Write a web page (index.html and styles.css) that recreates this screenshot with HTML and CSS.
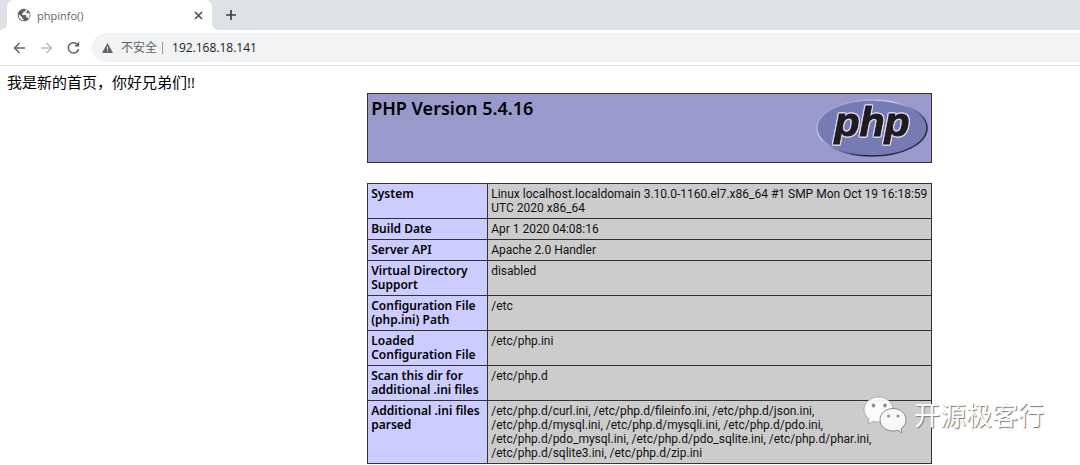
FILE: index.html
```html
<!DOCTYPE html>
<html lang="zh-CN">
<head>
<meta charset="utf-8">
<title>phpinfo()</title>
<link rel="stylesheet" href="styles.css">
</head>
<body>
<header class="browser">
  <div class="tabs">
    <div class="tab-lead"></div>
    <div class="tab">
      <svg class="globe" viewBox="0 0 14 14" aria-hidden="true"><circle cx="7" cy="7" r="6.3" fill="#5f6368"/><path d="M1.800 6.300l3.400 3.300v1l1.400.8v1.200C3.700 12.400 1.500 9.700 1.800 6.300z" fill="#fff"/><path d="M8.500 1.600v.9L7.700 3.700H6.200v1.600L5 6v1h3.500l.9 1v1.400h1.300l.8.9c1.200-1.700 1.400-3.300.8-5.300l-1.600.5-1.600-.9.5-1.200 1-.8c-.6-.5-1.300-.9-2.100-1z" fill="#fff"/></svg>
      <span class="tab-title">phpinfo()</span>
      <button class="icon-button close" aria-label="Close tab"><svg width="9" height="9" viewBox="0 0 9 9"><path d="M1 1l7 7M8 1L1 8" stroke="#45494d" stroke-width="1.500" fill="none"/></svg></button>
    </div>
    <div class="tab-rest">
      <button class="icon-button" aria-label="New tab"><svg width="12" height="12" viewBox="0 0 12 12"><path d="M6 1v10M1 6h10" stroke="#3c4043" stroke-width="1.700" fill="none"/></svg></button>
    </div>
  </div>
  <div class="toolbar">
    <button class="icon-button" aria-label="Back"><svg width="13" height="12" viewBox="0 0 13 12"><path d="M12 6H1.500M6.500 1l-5 5 5 5" stroke="#5f6368" stroke-width="1.500" fill="none"/></svg></button>
    <button class="icon-button" aria-label="Forward"><svg width="13" height="12" viewBox="0 0 13 12"><path d="M1 6h10.500M6.500 1l5 5-5 5" stroke="#b9bbbe" stroke-width="1.500" fill="none"/></svg></button>
    <button class="icon-button" aria-label="Reload"><svg width="13" height="13" viewBox="0 0 13 13"><path d="M11 4.200A5.200 5.200 0 1 0 11.600 8" stroke="#5f6368" stroke-width="1.500" fill="none"/><path d="M12.200.6v5H7.200z" fill="#5f6368"/></svg></button>
    <div class="omnibox">
      <svg width="11" height="10" viewBox="0 0 11 10" aria-hidden="true"><path d="M5.500 0L11 10H0z" fill="#5f6368"/><path d="M5.500 3.500v3M5.500 7.400v1.200" stroke="#f1f3f4" stroke-width="1.100"/></svg>
      <span class="insecure">不安全</span>
      <input class="address" type="text" aria-label="Address" value="192.168.18.141">
    </div>
  </div>
</header>
<main class="page">
  <p class="greeting">我是新的首页，你好兄弟们!!</p>
  <div class="info">
    <div class="banner">
      <h1>PHP Version 5.4.16</h1>
      <svg class="php-logo" width="112" height="60" viewBox="0 0 112 60" role="img" aria-label="PHP logo">
        <defs>
          <linearGradient id="rim" x1="0" y1="0" x2="1" y2="1"><stop offset="0.150" stop-color="#a0a2d4"/><stop offset="0.350" stop-color="#c9cceb"/><stop offset="0.500" stop-color="#8084b8"/><stop offset="0.720" stop-color="#25253d"/><stop offset="1" stop-color="#343452"/></linearGradient>
        </defs>
        <ellipse cx="56" cy="30" rx="55" ry="28" fill="#777bb3" stroke="url(#rim)" stroke-width="1.500"/>
        <text class="php-word" x="56" y="38" text-anchor="middle">php</text>
      </svg>
    </div>
    <table class="details">
      <tbody>
        <tr><th scope="row">System</th><td>Linux localhost.localdomain 3.10.0-1160.el7.x86_64 #1 SMP Mon Oct 19 16:18:59<br>UTC 2020 x86_64</td></tr>
        <tr><th scope="row">Build Date</th><td>Apr 1 2020 04:08:16</td></tr>
        <tr><th scope="row">Server API</th><td>Apache 2.0 Handler</td></tr>
        <tr><th scope="row">Virtual Directory<br>Support</th><td>disabled</td></tr>
        <tr><th scope="row">Configuration File<br>(php.ini) Path</th><td>/etc</td></tr>
        <tr><th scope="row">Loaded<br>Configuration File</th><td>/etc/php.ini</td></tr>
        <tr><th scope="row">Scan this dir for<br>additional .ini files</th><td>/etc/php.d</td></tr>
        <tr><th scope="row">Additional .ini files<br>parsed</th><td>/etc/php.d/curl.ini, /etc/php.d/fileinfo.ini, /etc/php.d/json.ini,<br>/etc/php.d/mysql.ini, /etc/php.d/mysqli.ini, /etc/php.d/pdo.ini,<br>/etc/php.d/pdo_mysql.ini, /etc/php.d/pdo_sqlite.ini, /etc/php.d/phar.ini,<br>/etc/php.d/sqlite3.ini, /etc/php.d/zip.ini</td></tr>
      </tbody>
    </table>
  </div>
</main>
<div class="watermark">
  <svg width="44" height="38" viewBox="0 0 44 38" aria-hidden="true">
    <path d="M15.500 1C7.500 1 1 6.500 1 13.500c0 4 2 7.300 5.200 9.600L5 28l5.500-2.800c1.600.5 3.200.8 5 .8C23.500 26 30 20.500 30 13.500S23.500 1 15.500 1z" fill="#fff" fill-opacity="0.920" stroke="#999" stroke-width="0.700"/>
    <ellipse cx="10.500" cy="9.500" rx="1.800" ry="1.900" fill="#8d8d8d"/><ellipse cx="22" cy="9.500" rx="1.800" ry="1.900" fill="#8d8d8d"/>
    <path d="M30 12.500c-7.300 0-13 5-13 11.300S22.700 35 30 35c1.700 0 3.300-.3 4.800-.8L39 37l-1-4.400c3.200-2 5-5.200 5-8.800 0-6.300-5.700-11.300-13-11.300z" fill="#f8f8f8" stroke="#888" stroke-width="1"/>
    <ellipse cx="25.500" cy="20" rx="1.500" ry="1.600" fill="#8d8d8d"/><ellipse cx="35" cy="20" rx="1.500" ry="1.600" fill="#8d8d8d"/>
  </svg>
  <span>开源极客行</span>
</div>
</body>
</html>
```
FILE: styles.css
```css
* { box-sizing: border-box; }
body {
  margin: 0;
  background: #fff;
  color: #000;
  font-family: "Open Sans", "Noto Sans CJK SC", sans-serif;
  font-size: 12px;
  overflow: hidden;
}
.tabs { display: flex; height: 30px; background: #fff; }
.tab-lead { width: 7px; background: #dee1e6; border-bottom-right-radius: 7px; }
.tab {
  display: flex;
  align-items: center;
  width: 205px;
  padding: 0 7px 0 10px;
  background: linear-gradient(#dee1e6 0 8px, #fff 8px);
  position: relative;
  isolation: isolate;
}
.tab::before {
  content: "";
  position: absolute;
  inset: 0;
  z-index: -1;
  background: #fff;
  border-radius: 7px 7px 0 0;
}
.globe { width: 14px; height: 14px; }
.tab-title { flex: 1; margin-left: 6px; font-size: 11px; color: #5f6368; }
.icon-button {
  display: inline-flex;
  align-items: center;
  justify-content: center;
  width: 13px;
  height: 14px;
  padding: 0;
  border: 0;
  background: none;
}
.tab-rest {
  display: flex;
  flex: 1;
  align-items: center;
  padding-left: 12px;
  background: #dee1e6;
  border-bottom-left-radius: 7px;
}
.toolbar {
  display: flex;
  align-items: center;
  gap: 14px;
  height: 36px;
  padding-left: 13px;
  border-bottom: 1px solid #e0e1e3;
}
.omnibox {
  display: flex;
  flex: 1;
  align-items: center;
  height: 29px;
  margin-left: -2px;
  padding-left: 10px;
  background: #f1f3f4;
  border-radius: 15px 0 0 15px;
}
.insecure {
  margin-left: 8px;
  padding-right: 5px;
  border-right: 1px solid #8d9094;
  line-height: 12px;
  color: #5f6368;
}
.address {
  flex: 1;
  min-width: 0;
  padding: 0 0 0 9px;
  border: 0;
  background: none;
  color: #202124;
  font: inherit;
}
.greeting { margin: 0; padding: 6px 7px 0; font-size: 15px; line-height: 21px; }
.info { width: 565px; max-width: 66%; margin-left: 34%; }
.banner {
  display: flex;
  justify-content: space-between;
  height: 70px;
  padding: 4px 3px;
  border: 1px solid #333;
  background: #9999cc;
}
.banner h1 {
  margin: 0;
  font-family: "Noto Sans", sans-serif;
  font-size: 18px;
  font-weight: 600;
  line-height: 20px;
}
.php-word {
  font: italic bold 41px "Liberation Sans", sans-serif;
  fill: #1f1b20;
  stroke: #1f1b20;
  stroke-width: 1px;
  filter: drop-shadow(1px 0 0 #dcdcec) drop-shadow(-1px 0 0 #dcdcec) drop-shadow(0 1px 0 #dcdcec) drop-shadow(0 -1px 0 #dcdcec);
}
.details {
  width: 100%;
  margin-top: 20px;
  border-collapse: collapse;
  table-layout: fixed;
  line-height: 14px;
}
.details th, .details td {
  padding: 3px;
  border: 1px solid #333;
  text-align: left;
  vertical-align: top;
  white-space: nowrap;
}
.details th {
  width: 120px;
  background: #ccccff;
  font-family: "Noto Sans", sans-serif;
  font-weight: 600;
}
.details td {
  background: #cccccc;
  color: #111;
  font-family: Roboto, sans-serif;
}
.watermark {
  position: absolute;
  right: 36px;
  bottom: 31px;
  display: flex;
  align-items: center;
  gap: 7px;
  color: #fff;
  font-size: 26px;
  line-height: 38px;
  text-shadow: 1px 1px 1px #777;
}
```
